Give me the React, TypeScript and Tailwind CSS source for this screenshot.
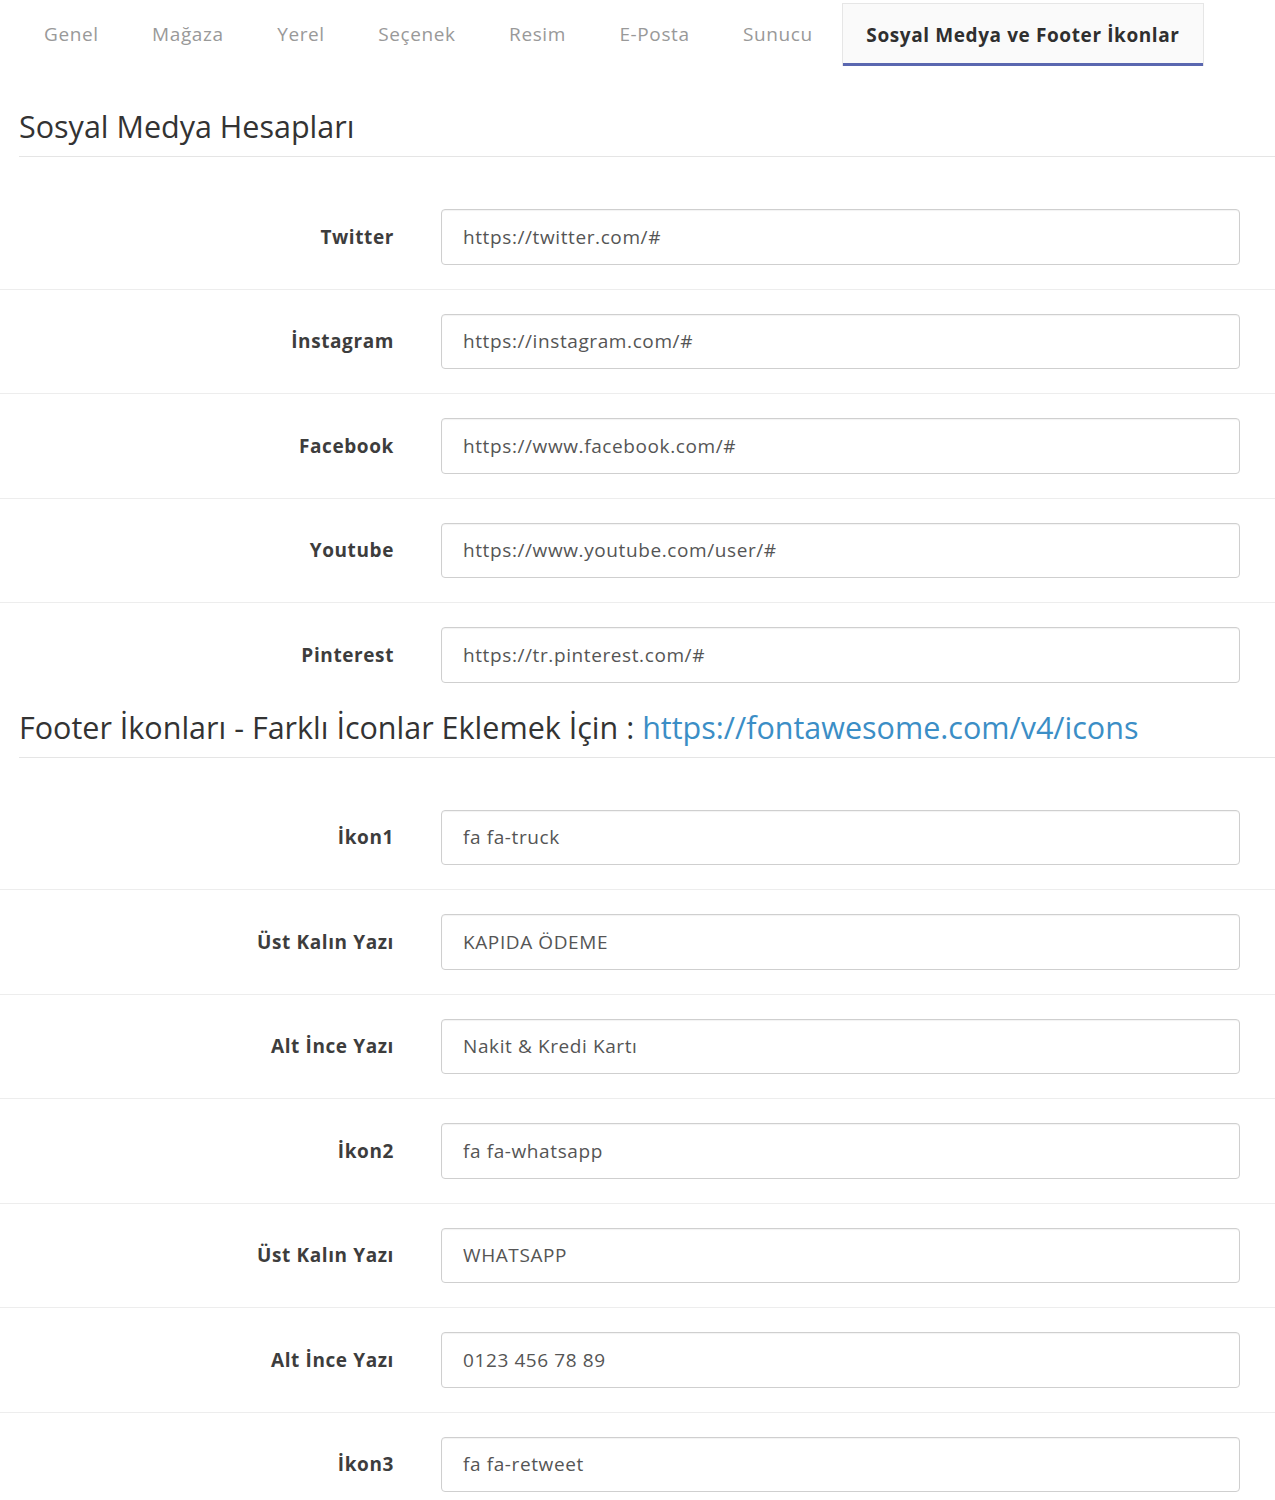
const tabs = ["Genel", "Mağaza", "Yerel", "Seçenek", "Resim", "E-Posta", "Sunucu"];

const socialFields = [
  { label: "Twitter", value: "https://twitter.com/#" },
  { label: "İnstagram", value: "https://instagram.com/#" },
  { label: "Facebook", value: "https://www.facebook.com/#" },
  { label: "Youtube", value: "https://www.youtube.com/user/#" },
  { label: "Pinterest", value: "https://tr.pinterest.com/#" },
];

const footerFields = [
  { label: "İkon1", value: "fa fa-truck" },
  { label: "Üst Kalın Yazı", value: "KAPIDA ÖDEME" },
  { label: "Alt İnce Yazı", value: "Nakit & Kredi Kartı" },
  { label: "İkon2", value: "fa fa-whatsapp" },
  { label: "Üst Kalın Yazı", value: "WHATSAPP" },
  { label: "Alt İnce Yazı", value: "0123 456 78 89" },
  { label: "İkon3", value: "fa fa-retweet" },
];

function FieldRow({ label, value, first }: { label: string; value: string; first: boolean }) {
  return (
    <div className={`flex items-center py-[24px] ${first ? "" : "border-t border-[#ededed]"}`}>
      <label className="w-[418px] shrink-0 pr-[24px] text-right text-[19px] font-bold tracking-[0.6px] text-[#3d3d3d]">
        {label}
      </label>
      <div className="pl-[23px] w-[822px]">
        <input
          type="text"
          defaultValue={value}
          className="h-[55.5px] w-full rounded-[4px] border border-[#cfcfcf] bg-white px-[21px] text-[19px] tracking-[0.6px] text-[#555] shadow-[inset_0_1px_1px_rgba(0,0,0,0.05)] outline-none"
        />
      </div>
    </div>
  );
}

export default function App() {
  return (
    <main className="min-h-screen bg-white" style={{ fontFamily: '"Open Sans", "Noto Sans", sans-serif' }}>
      {/* Tabs */}
      <ul className="flex items-start pl-[20px] pt-[3px]">
        {tabs.map((tab) => (
          <li key={tab} className="mr-[5.5px]">
            <span className="block px-[24px] pt-[18px] pb-[19px] text-[19px] leading-[26px] tracking-[0.6px] text-[#999]">
              {tab}
            </span>
          </li>
        ))}
        <li>
          <span className="block border border-b-0 border-[#e6e6e6] bg-[#fafafa] px-[23px] pt-[18px] pb-[18px] text-[19px] font-bold leading-[26px] tracking-[0.6px] text-[#2f2f2f] shadow-[inset_0_-3px_0_#5a67b0]">
            Sosyal Medya ve Footer İkonlar
          </span>
        </li>
      </ul>

      {/* Sosyal Medya */}
      <h2 className="ml-[19px] mt-[38px] border-b border-[#e5e5e5] pb-[8px] text-[30.5px] leading-[44px] text-[#333]">
        Sosyal Medya Hesapları
      </h2>
      <div className="mt-[28px]">
        {socialFields.map((f, i) => (
          <FieldRow key={f.label} label={f.label} value={f.value} first={i === 0} />
        ))}
      </div>

      {/* Footer İkonları */}
      <h2 className="-mt-[2px] ml-[19px] border-b border-[#e5e5e5] pb-[8px] text-[30.5px] leading-[44px] text-[#333]">
        Footer İkonları - Farklı İconlar Eklemek İçin :{" "}
        <a href="#" className="text-[#3b8ec6]">
          https://fontawesome.com/v4/icons
        </a>
      </h2>
      <div className="mt-[28px]">
        {footerFields.map((f, i) => (
          <FieldRow key={i} label={f.label} value={f.value} first={i === 0} />
        ))}
      </div>
    </main>
  );
}
